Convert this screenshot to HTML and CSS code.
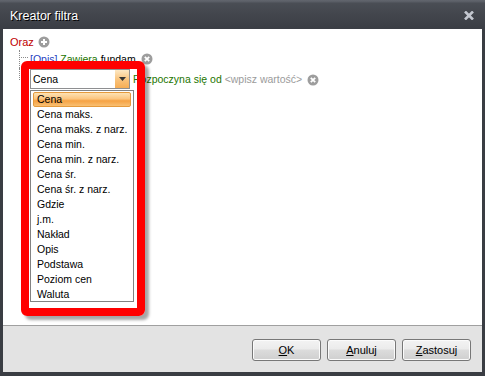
FILE: index.html
```html
<!DOCTYPE html>
<html lang="pl">
<head>
<meta charset="utf-8">
<title>Kreator filtra</title>
<link rel="stylesheet" href="styles.css">
</head>
<body>
<div class="window">
  <div class="titlebar">
    <span class="title">Kreator filtra</span>
    <svg class="close" width="10" height="9" viewBox="0 0 10 9"><path d="M1 0.5 L9 8.5 M9 0.5 L1 8.5" stroke="#c3c7cf" stroke-width="2.6"/></svg>
  </div>
  <div class="frame">
    <div class="content">
      <div class="group">
        <span class="op">Oraz</span>
        <svg class="icon" width="12" height="12" viewBox="0 0 12 12"><circle cx="6" cy="6" r="5.5" fill="#9d9d9d"/><path d="M6 3 V9 M3 6 H9" stroke="#fff" stroke-width="2"/></svg>
      </div>
      <div class="children">
        <div class="node first">
          <span class="expr"><span class="field">[Opis]</span> <span class="cond">Zawiera</span> <span class="val">fundam</span></span>
          <svg class="icon" width="12" height="12" viewBox="0 0 12 12"><circle cx="6" cy="6" r="5.5" fill="#9d9d9d"/><path d="M3.8 3.8 L8.2 8.2 M8.2 3.8 L3.8 8.2" stroke="#fff" stroke-width="1.8"/></svg>
        </div>
        <div class="node last">
          <div class="combo">
            <span class="combo-text">Cena</span>
            <span class="combo-btn"><svg width="7" height="4" viewBox="0 0 7 4"><path d="M0 0 H7 L3.5 4 Z" fill="#333"/></svg></span>
          </div>
          <span class="expr after-combo"><span class="cond">Rozpoczyna się od</span> <span class="ph">&lt;wpisz wartość&gt;</span></span>
          <svg class="icon" width="12" height="12" viewBox="0 0 12 12"><circle cx="6" cy="6" r="5.5" fill="#9d9d9d"/><path d="M3.8 3.8 L8.2 8.2 M8.2 3.8 L3.8 8.2" stroke="#fff" stroke-width="1.8"/></svg>
        </div>
      </div>
      <ul class="dropdown">
        <li class="sel">Cena</li>
        <li>Cena maks.</li>
        <li>Cena maks. z narz.</li>
        <li>Cena min.</li>
        <li>Cena min. z narz.</li>
        <li>Cena śr.</li>
        <li>Cena śr. z narz.</li>
        <li>Gdzie</li>
        <li>j.m.</li>
        <li>Nakład</li>
        <li>Opis</li>
        <li>Podstawa</li>
        <li>Poziom cen</li>
        <li>Waluta</li>
      </ul>
      <div class="highlight"></div>
    </div>
    <div class="footer">
      <button class="btn"><u>O</u>K</button>
      <button class="btn"><u>A</u>nuluj</button>
      <button class="btn"><u>Z</u>astosuj</button>
    </div>
  </div>
</div>
</body>
</html>
```
FILE: styles.css
```css
html, body {
  margin: 0;
  padding: 0;
}
body {
  width: 485px;
  height: 376px;
  overflow: hidden;
  font-family: "Liberation Sans", Arial, sans-serif;
  font-size: 10.5px;
  color: #000;
}
.window {
  width: 485px;
  height: 376px;
  display: flex;
  flex-direction: column;
  background: #3a3d43;
}
.titlebar {
  height: 29px;
  flex: none;
  display: flex;
  align-items: center;
  justify-content: space-between;
  padding: 0 11px 0 10px;
  box-sizing: border-box;
  background: linear-gradient(#62666e 0px, #585c64 2px, #4a4e55 3px, #43464d 14px, #3b3e45 28px);
}
.title {
  color: #fff;
  font-size: 12.5px;
  text-shadow: 1px 1px 0 #000;
  padding-top: 2px;
}
.close {
  display: block;
  margin-top: 1px;
}
.frame {
  flex: 1;
  margin: 0 3px 4px 3px;
  display: flex;
  flex-direction: column;
}
.content {
  flex: 1;
  background: #fff;
  position: relative;
  padding: 6px 7px 0 7px;
}
.group {
  display: flex;
  align-items: center;
  gap: 4px;
  height: 14px;
  font-size: 11px;
}
.op { color: #c00000; }
.icon { display: block; flex: none; }
.children {
  margin-left: 9px;
  padding-top: 1px;
}
.node {
  position: relative;
  display: flex;
  align-items: center;
  padding-left: 11px;
}
.expr { white-space: nowrap; }
.node::before {
  content: "";
  position: absolute;
  left: 0;
  top: 0;
  width: 8px;
  border-left: 1px dotted #8a8a8a;
  border-bottom: 1px dotted #8a8a8a;
}
.node.first { height: 18px; }
.node.first::before { height: 7px; }
.node.first::after {
  content: "";
  position: absolute;
  left: 0;
  top: 0;
  bottom: 0;
  border-left: 1px dotted #8a8a8a;
}
.node.last {
  height: 22px;
  padding-top: 1px;
  align-items: flex-start;
}
.node.last::before { height: 11px; }
.node.last > .expr { margin-top: 4px; }
.node.last > .icon { margin-top: 5px; }
.field { color: #1f3fbf; }
.cond { color: #237500; }
.val { color: #000; }
.ph { color: #9b9b9b; }
.node .icon { margin-left: 5px; }
.combo {
  width: 100px;
  height: 20px;
  box-sizing: border-box;
  border: 1px solid #8e8f91;
  background: #fff;
  display: flex;
  align-items: center;
  justify-content: space-between;
  padding-left: 2px;
}
.combo-btn {
  width: 14px;
  height: 18px;
  display: flex;
  align-items: center;
  justify-content: center;
  background: linear-gradient(#fde8c4, #f9c27a 55%, #f6ae55);
}
.after-combo { margin-left: 3px; }
.dropdown {
  position: absolute;
  left: 27px;
  top: 61px;
  width: 104px;
  height: 212px;
  box-sizing: border-box;
  margin: 0;
  padding: 1px;
  list-style: none;
  background: #fff;
  border: 1px solid #828282;
}
.dropdown li {
  height: 15px;
  line-height: 15px;
  padding-left: 4px;
  margin: 0 1px;
  white-space: nowrap;
}
.dropdown li.sel {
  box-sizing: border-box;
  border: 1px solid #e59a3c;
  border-radius: 2px;
  padding-left: 3px;
  line-height: 13px;
  background: linear-gradient(#fde2b4, #fbc57f 45%, #f6a243 60%, #f9c073);
}
.highlight {
  position: absolute;
  left: 18px;
  top: 32px;
  width: 124px;
  height: 255px;
  box-sizing: border-box;
  border: 8px solid #ff0000;
  border-radius: 6px;
  box-shadow: 4px 4px 3px rgba(0, 0, 0, 0.35);
}
.footer {
  height: 47px;
  flex: none;
  box-sizing: border-box;
  border-top: 1px solid #a0a0a0;
  background: #e3e3e3;
  display: flex;
  justify-content: flex-end;
  align-items: flex-start;
  gap: 6px;
  padding: 13px 11px 0 0;
}
.btn {
  width: 69px;
  height: 22px;
  box-sizing: border-box;
  border: 1px solid #777;
  border-radius: 3px;
  font-family: "Liberation Sans", Arial, sans-serif;
  font-size: 11px;
  color: #000;
  padding: 0;
  background: linear-gradient(#f3f3f3, #ebebeb 45%, #dcdcdc 50%, #cfcfcf);
  box-shadow: inset 0 0 0 1px #fbfbfb;
}
```
